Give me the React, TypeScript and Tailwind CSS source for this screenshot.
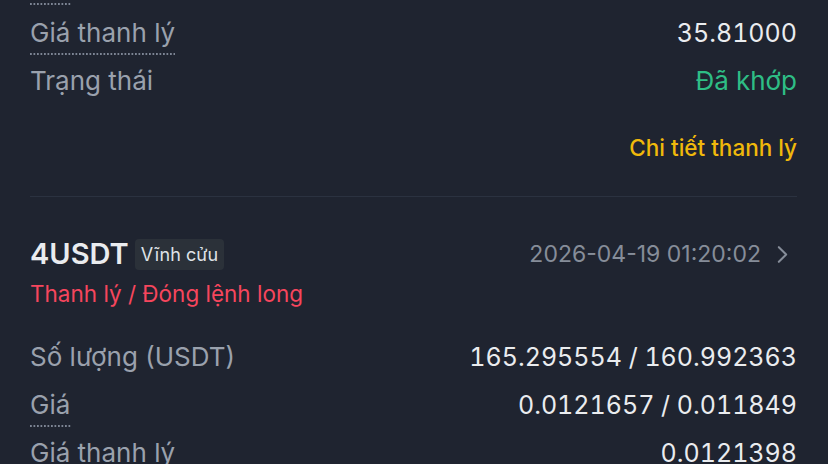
import React from "react";

const font = { fontFamily: '"Inter", "Noto Sans", sans-serif' };

function Dots({ w }: { w: string }) {
  return (
    <div
      className={`h-[2px] ${w} bg-[linear-gradient(to_right,#7d8594_50%,transparent_50%)] bg-[length:3.5px_2px]`}
    />
  );
}

function Row({
  label,
  value,
  dotted,
  valueClass = "text-[#eaecef]",
}: {
  label: string;
  value: string;
  dotted?: string;
  valueClass?: string;
}) {
  return (
    <div className="h-[48px] flex items-start justify-between">
      <div className="flex flex-col">
        <span className="text-[26px] leading-[34px] text-[#9aa1ad]">{label}</span>
        {dotted ? <div className="mt-[3px]"><Dots w={dotted} /></div> : null}
      </div>
      <span className={`text-[25px] leading-[34px] tabular-nums ${valueClass}`}>{value}</span>
    </div>
  );
}

export default function App() {
  return (
    <div
      className="w-[828px] h-[464px] overflow-hidden bg-[#1f2430] pl-[30px] pr-[31px]"
      style={font}
    >
      <div className="pt-[3px] h-[16px]">
        <Dots w="w-[41px]" />
      </div>
      <Row label="Giá thanh lý" value="35.81000" dotted="w-[145px]" />
      <Row label="Trạng thái" value="Đã khớp" valueClass="text-[#2ebd85] text-[26px]" />
      <div className="flex justify-end pt-[20px] h-[84px]">
        <span className="text-[22.5px] leading-[32px] font-medium text-[#f0b90b]">Chi tiết thanh lý</span>
      </div>
      <div className="h-px bg-[#2b3240]" />
      <div className="pt-[39px] flex items-center justify-between">
        <div className="flex items-center gap-[6px]">
          <span className="text-[29px] leading-[36px] font-semibold text-[#eaecef]">4USDT</span>
          <span className="rounded-[4px] bg-[#2b3139] px-[6px] h-[31px] flex items-center text-[18px] text-[#dfe2e7]">
            Vĩnh cửu
          </span>
        </div>
        <div className="flex items-center gap-[16px] pr-[9px]">
          <span className="text-[23px] text-[#868d99]">2026-04-19 01:20:02</span>
          <svg width="11" height="19" viewBox="0 0 12 20" fill="none">
            <path d="M2 2 L10 10 L2 18" stroke="#868d99" strokeWidth="2.2" strokeLinecap="round" strokeLinejoin="round" />
          </svg>
        </div>
      </div>
      <div className="h-[68px] pt-[6px]">
        <span className="text-[22.5px] leading-[32px] text-[#f6465d]">Thanh lý / Đóng lệnh long</span>
      </div>
      <Row label="Số lượng (USDT)" value="165.295554 / 160.992363" />
      <Row label="Giá" value="0.0121657 / 0.011849" dotted="w-[41px]" />
      <Row label="Giá thanh lý" value="0.0121398" dotted="w-[145px]" />
    </div>
  );
}
